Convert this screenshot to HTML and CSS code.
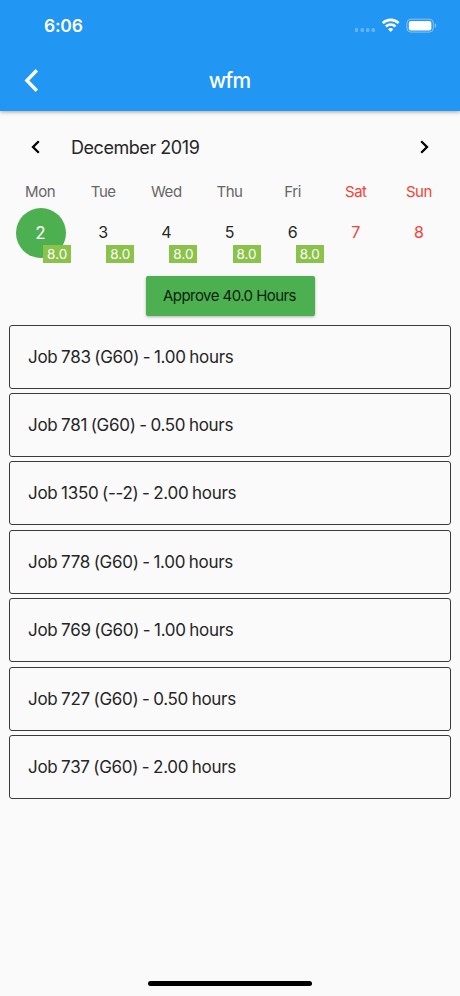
FILE: index.html
```
<!DOCTYPE html>
<html lang="en">
<head>
    <meta charset="UTF-8">
    <title>wfm</title>
    <link rel="stylesheet" href="styles.css">
</head>
<body>
<header class="app-bar">
    <div class="status-bar">
        <span class="clock">6:06</span>
        <svg class="status-icons" width="84" height="18" viewBox="0 0 84 18">
            <g fill="#fff" fill-opacity="0.3">
                <rect x="1" y="12" width="3" height="4" rx="1"/>
                <rect x="6.5" y="12" width="3.5" height="4" rx="1.5"/>
                <rect x="12" y="12" width="3.5" height="4" rx="1.5"/>
                <rect x="17.5" y="12" width="3.5" height="4" rx="1.5"/>
            </g>
            <g fill="none" stroke="#fff" stroke-width="2.7">
                <path d="M28.8 7.1a11.2 11.2 0 0 1 15.8 0"/>
                <path d="M31.9 10.5a6.8 6.8 0 0 1 9.6 0"/>
            </g>
            <path d="M36.7 16.1l-2.6-2.8a3.8 3.8 0 0 1 5.2 0z" fill="#fff"/>
            <rect x="52.9" y="3.2" width="26.4" height="12.9" rx="4" fill="none" stroke="#fff" stroke-opacity="0.45"/>
            <rect x="54.8" y="4.9" width="22.6" height="9.5" rx="2.2" fill="#fff"/>
            <path d="M80.8 7.4v4.4c1.9-.7 1.9-3.7 0-4.4z" fill="#fff" fill-opacity="0.5"/>
        </svg>
    </div>
    <div class="title-bar">
        <svg class="back" width="16" height="24" viewBox="0 0 16 24">
            <path d="M12.8 1.3L2.9 11.5l9.9 10.2" fill="none" stroke="#fff" stroke-width="3.4"/>
        </svg>
        <h1>wfm</h1>
    </div>
</header>

<section class="calendar">
    <div class="month">
        <svg width="12" height="16" viewBox="0 0 12 16">
            <path d="M8.8 2.2L3 8l5.8 5.8" fill="none" stroke="#000" stroke-width="2.3"/>
        </svg>
        <span class="month-name">December 2019</span>
        <svg width="12" height="16" viewBox="0 0 12 16">
            <path d="M3.2 2.2L9 8l-5.8 5.8" fill="none" stroke="#000" stroke-width="2.3"/>
        </svg>
    </div>
    <div class="week names">
        <span>Mon</span>
        <span>Tue</span>
        <span>Wed</span>
        <span>Thu</span>
        <span>Fri</span>
        <span class="weekend">Sat</span>
        <span class="weekend">Sun</span>
    </div>
    <div class="week days">
        <div class="day"><span class="selected">2</span><b class="hours">8.0</b></div>
        <div class="day">3<b class="hours">8.0</b></div>
        <div class="day">4<b class="hours">8.0</b></div>
        <div class="day">5<b class="hours">8.0</b></div>
        <div class="day">6<b class="hours">8.0</b></div>
        <div class="day weekend">7</div>
        <div class="day weekend">8</div>
    </div>
</section>

<button class="approve">Approve 40.0 Hours</button>

<ul class="jobs">
    <li>Job 783 (G60) - 1.00 hours</li>
    <li>Job 781 (G60) - 0.50 hours</li>
    <li>Job 1350 (--2) - 2.00 hours</li>
    <li>Job 778 (G60) - 1.00 hours</li>
    <li>Job 769 (G60) - 1.00 hours</li>
    <li>Job 727 (G60) - 0.50 hours</li>
    <li>Job 737 (G60) - 2.00 hours</li>
</ul>

<div class="home-indicator"></div>
</body>
</html>
```
FILE: styles.css
```
* {
    box-sizing: border-box;
}

body {
    display: flex;
    flex-direction: column;
    height: 996px;
    margin: 0;
    overflow: hidden;
    background: #fafafa;
    color: #262626;
    font-family: Inter, "Liberation Sans", sans-serif;
}

.app-bar {
    flex: none;
    height: 111px;
    background: #2196f3;
    color: #fff;
    box-shadow: 0 1px 4px rgba(0, 0, 0, 0.35);
}

.status-bar {
    display: flex;
    justify-content: space-between;
    height: 50px;
    padding: 16px 22px 0 44px;
}

.clock {
    font-size: 17.5px;
    font-weight: 600;
    line-height: 20px;
    letter-spacing: -0.2px;
}

.title-bar {
    display: flex;
    align-items: center;
    height: 61px;
    padding: 0 41px 0 24px;
}

h1 {
    flex: 1;
    margin: 0;
    font-size: 21px;
    font-weight: 500;
    letter-spacing: -0.8px;
    text-align: center;
}

.calendar {
    padding: 0 9px;
}

.month {
    display: flex;
    align-items: center;
    height: 72px;
    padding: 0 21px;
}

.month-name {
    flex: 1;
    padding-left: 29px;
    font-size: 18px;
    letter-spacing: -0.45px;
}

.week {
    display: grid;
    grid-template-columns: repeat(7, minmax(0, 1fr));
    text-align: center;
}

.names {
    height: 24px;
    color: #666;
    font-size: 15px;
    line-height: 18px;
    letter-spacing: -0.45px;
}

.names span {
    padding-right: 1px;
}

.day {
    position: relative;
    height: 52px;
    padding-right: 1px;
    font-size: 16px;
    line-height: 51px;
}

.names .weekend, .days .weekend {
    color: #f44336;
}

.selected {
    display: block;
    width: 50px;
    height: 50px;
    margin: 1px 7px;
    padding-right: 1px;
    border-radius: 50%;
    background: #4caf50;
    color: #fff;
    font-size: 17px;
    line-height: 50px;
}

.hours {
    position: absolute;
    right: 1px;
    bottom: -4px;
    width: 28px;
    height: 18px;
    background: #8bc34a;
    color: #fff;
    font-size: 13.5px;
    font-weight: 400;
    line-height: 18px;
}

.approve {
    flex: none;
    align-self: center;
    width: 169px;
    height: 40px;
    margin: 17px 0 8.6px;
    padding: 0 1px 2px 0;
    border: 0;
    border-radius: 2px;
    background: #4caf50;
    box-shadow: 0 1px 3px rgba(0, 0, 0, 0.3);
    color: #0d1f0e;
    font-family: inherit;
    font-size: 15px;
    font-weight: 400;
    letter-spacing: -0.55px;
}

.jobs {
    display: flex;
    flex-direction: column;
    gap: 4.4px;
    margin: 0;
    padding: 0 9px;
    list-style: none;
}

.jobs li {
    height: 64px;
    padding-left: 18px;
    border: 1px solid #3a3a3a;
    border-radius: 3px;
    font-size: 17px;
    line-height: 62px;
    letter-spacing: -0.3px;
    word-spacing: -0.8px;
}

.home-indicator {
    flex: none;
    width: 164px;
    height: 5px;
    margin: auto auto 10px;
    border-radius: 3px;
    background: #000;
}
```
